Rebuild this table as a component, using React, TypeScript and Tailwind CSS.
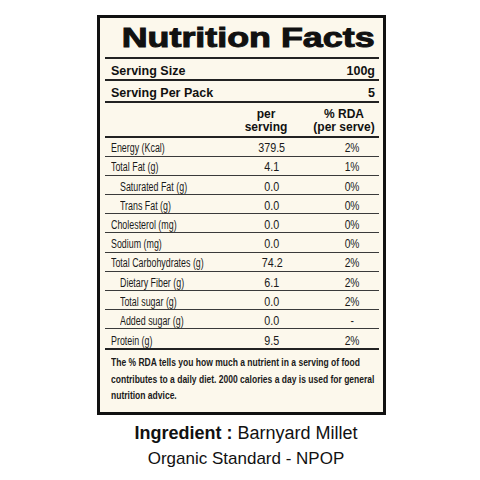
import React from "react";

type Row = { name: string; value: string; rda: string; indent?: boolean };

const rows: Row[] = [
  { name: "Energy (Kcal)", value: "379.5", rda: "2%" },
  { name: "Total Fat (g)", value: "4.1", rda: "1%" },
  { name: "Saturated Fat (g)", value: "0.0", rda: "0%", indent: true },
  { name: "Trans Fat (g)", value: "0.0", rda: "0%", indent: true },
  { name: "Cholesterol (mg)", value: "0.0", rda: "0%" },
  { name: "Sodium (mg)", value: "0.0", rda: "0%" },
  { name: "Total Carbohydrates (g)", value: "74.2", rda: "2%" },
  { name: "Dietary Fiber (g)", value: "6.1", rda: "2%", indent: true },
  { name: "Total sugar (g)", value: "0.0", rda: "2%", indent: true },
  { name: "Added sugar (g)", value: "0.0", rda: "-", indent: true },
  { name: "Protein (g)", value: "9.5", rda: "2%" },
];

export default function App() {
  return (
    <div
      className="w-[480px] h-[480px] bg-white overflow-hidden text-[#111]"
      style={{ fontFamily: '"Liberation Sans", Arial, sans-serif' }}
    >
      <div className="ml-[97px] mt-[15px] w-[289px] border-[3px] border-[#111] bg-[#fcf8ec] pl-[5px] pr-[4px]">
        {/* Title */}
        <div className="h-[41px] flex items-end justify-end pr-[4px] pb-[5px] border-b-2 border-[#222]">
          <span className="inline-block origin-right scale-x-[1.28] text-[28px] leading-none font-bold whitespace-nowrap [-webkit-text-stroke:1px_#111]">
            Nutrition Facts
          </span>
        </div>

        {/* Serving rows */}
        <div className="h-[22px] flex items-end justify-between pl-[6px] pr-[4px] pb-[2px] border-b-2 border-[#222] text-[12.5px] leading-none font-bold">
          <span>Serving Size</span>
          <span>100g</span>
        </div>
        <div className="h-[22px] flex items-end justify-between pl-[6px] pr-[4px] pb-[2px] border-b-2 border-[#222] text-[12.5px] leading-none font-bold">
          <span>Serving Per Pack</span>
          <span>5</span>
        </div>

        {/* Header */}
        <div className="h-[34.5px] flex items-end pb-[2px] border-b-2 border-[#222] text-[12px] leading-[13px] font-bold">
          <div className="flex-1" />
          <div className="w-[58px] text-center">
            <div>per</div>
            <div>serving</div>
          </div>
          <div className="w-[70px] ml-[14px] text-center">
            <div>% RDA</div>
            <div>(per serve)</div>
          </div>
        </div>

        {/* Data rows */}
        {rows.map((r, i) => {
          const last = i === rows.length - 1;
          return (
            <div
              key={r.name}
              className={
                last
                  ? "h-[20.7px] flex items-end pb-[1px] border-b-[2.5px] border-[#222] text-[12.5px] leading-none text-[#1a1a1a]"
                  : "h-[19.2px] flex items-end pb-[1px] border-b border-[#3a3a3a] text-[12.5px] leading-none text-[#1a1a1a]"
              }
            >
              <div className={r.indent ? "flex-1 pl-[15px] whitespace-nowrap" : "flex-1 pl-[6px] whitespace-nowrap"}>
                <span className="inline-block origin-left scale-x-[0.71]">{r.name}</span>
              </div>
              <div className="w-[54px] text-center whitespace-nowrap">
                <span className="inline-block origin-center scale-x-[0.86]">{r.value}</span>
              </div>
              <div className="w-[54px] ml-[26px] text-center whitespace-nowrap">
                <span className="inline-block origin-center scale-x-[0.82]">{r.rda}</span>
              </div>
            </div>
          );
        })}

        {/* Footnote */}
        <div className="pl-[6px] pt-[4px] pb-[8px] text-[11.5px] leading-[16.5px] font-bold text-[#1a1a1a]">
          <div className="whitespace-nowrap">
            <span className="inline-block origin-left scale-x-[0.74]">
              The % RDA tells you how much a nutrient in a serving of food
            </span>
          </div>
          <div className="whitespace-nowrap">
            <span className="inline-block origin-left scale-x-[0.74]">
              contributes to a daily diet. 2000 calories a day is used for general
            </span>
          </div>
          <div className="whitespace-nowrap">
            <span className="inline-block origin-left scale-x-[0.74]">nutrition advice.</span>
          </div>
        </div>
      </div>

      {/* Ingredient */}
      <div className="mt-[5px] pl-[12px] text-center leading-[26px] text-[#111]">
        <div className="text-[18px]">
          <span className="font-bold">Ingredient : </span>
          <span>Barnyard Millet</span>
        </div>
        <div className="text-[17px]">Organic Standard - NPOP</div>
      </div>
    </div>
  );
}
